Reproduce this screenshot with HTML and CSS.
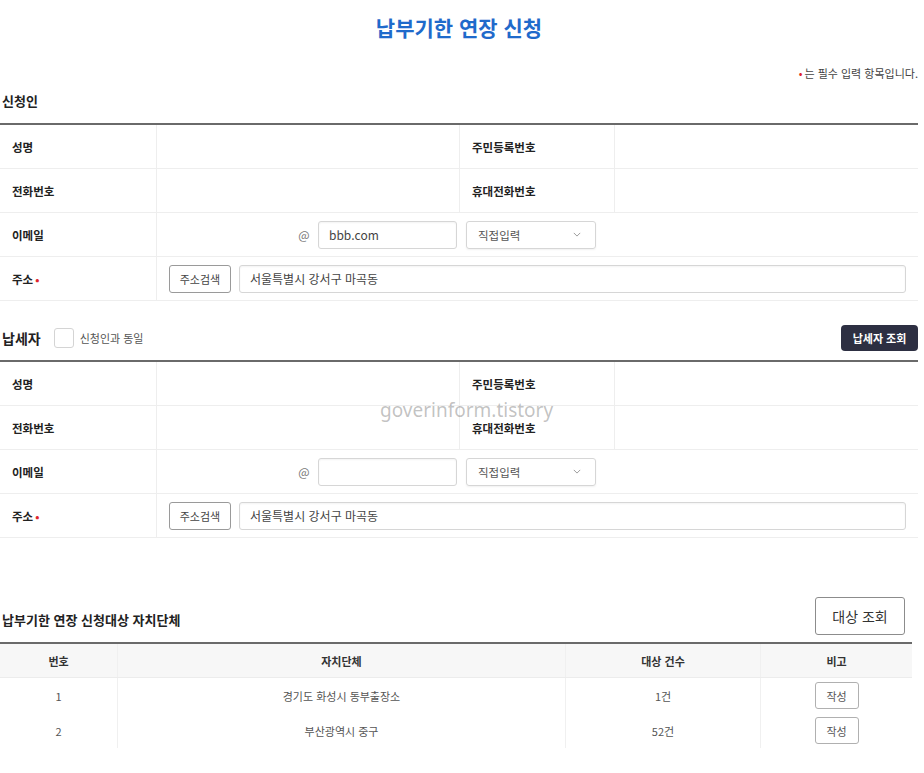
FILE: index.html
```html
<!DOCTYPE html>
<html lang="ko">
<head>
<meta charset="utf-8">
<title>납부기한 연장 신청</title>
<link rel="stylesheet" href="styles.css">
</head>
<body>
<div class="page">
  <h1 class="title">납부기한 연장 신청</h1>
  <p class="note"><span class="req">•</span>는 필수 입력 항목입니다.</p>

  <div class="sec-head">
    <h2 class="sec-title">신청인</h2>
  </div>
  <div class="form">
    <div class="row">
      <div class="lbl">성명</div>
      <div class="val"></div>
      <div class="lbl">주민등록번호</div>
      <div class="val"></div>
    </div>
    <div class="row">
      <div class="lbl">전화번호</div>
      <div class="val"></div>
      <div class="lbl">휴대전화번호</div>
      <div class="val"></div>
    </div>
    <div class="row">
      <div class="lbl">이메일</div>
      <div class="val wide email">
        <span class="email-id"></span>
        <span class="at">@</span>
        <span class="input domain">bbb.com</span>
        <span class="select">직접입력<svg class="chev" viewBox="0 0 10 6" width="8" height="5"><path d="M1 1l4 4 4-4" fill="none" stroke="#999" stroke-width="1.2"/></svg></span>
      </div>
    </div>
    <div class="row">
      <div class="lbl">주소<span class="req">•</span></div>
      <div class="val wide addr">
        <span class="btn-line">주소검색</span>
        <span class="input addr-input">서울특별시 강서구 마곡동</span>
      </div>
    </div>
  </div>

  <div class="sec-head sec2">
    <h2 class="sec-title">납세자</h2>
    <span class="check"></span>
    <span class="check-label">신청인과 동일</span>
    <span class="btn-dark">납세자 조회</span>
  </div>
  <div class="form">
    <div class="row">
      <div class="lbl">성명</div>
      <div class="val"></div>
      <div class="lbl">주민등록번호</div>
      <div class="val"></div>
    </div>
    <div class="row">
      <div class="lbl">전화번호</div>
      <div class="val"></div>
      <div class="lbl">휴대전화번호</div>
      <div class="val"></div>
    </div>
    <div class="row">
      <div class="lbl">이메일</div>
      <div class="val wide email">
        <span class="email-id"></span>
        <span class="at">@</span>
        <span class="input domain"></span>
        <span class="select">직접입력<svg class="chev" viewBox="0 0 10 6" width="8" height="5"><path d="M1 1l4 4 4-4" fill="none" stroke="#999" stroke-width="1.2"/></svg></span>
      </div>
    </div>
    <div class="row">
      <div class="lbl">주소<span class="req">•</span></div>
      <div class="val wide addr">
        <span class="btn-line">주소검색</span>
        <span class="input addr-input">서울특별시 강서구 마곡동</span>
      </div>
    </div>
  </div>

  <div class="sec-head sec3">
    <h2 class="sec-title">납부기한 연장 신청대상 자치단체</h2>
    <span class="btn-outline">대상 조회</span>
  </div>
  <div class="list">
    <div class="lrow lhead">
      <div>번호</div><div>자치단체</div><div>대상 건수</div><div>비고</div>
    </div>
    <div class="lrow">
      <div>1</div><div>경기도 화성시 동부출장소</div><div>1건</div><div><span class="btn-small">작성</span></div>
    </div>
    <div class="lrow">
      <div>2</div><div>부산광역시 중구</div><div>52건</div><div><span class="btn-small">작성</span></div>
    </div>
  </div>

  <div class="watermark">goverinform.tistory</div>
</div>
</body>
</html>
```

FILE: styles.css
```css
* { box-sizing: border-box; }
body {
  margin: 0;
  background: #fff;
  font-family: "Noto Sans CJK KR", "Noto Sans", sans-serif;
  color: #333;
}
.page {
  position: relative;
  width: 918px;
}
.title {
  margin: 0;
  height: 54px;
  line-height: 54px;
  text-align: center;
  font-size: 21px;
  font-weight: 700;
  color: #1f6acb;
}
.note {
  margin: 10px 0 0;
  line-height: 18px;
  text-align: right;
  font-size: 11px;
  color: #444;
}
.req {
  color: #e0262b;
  font-size: 11px;
  margin: 0 2px 0 2px;
}
.sec-head {
  display: flex;
  align-items: center;
  margin-top: 9px;
  margin-bottom: 12px;
  padding-left: 2px;
}
.sec-title {
  margin: 0;
  font-size: 13px;
  font-weight: 700;
  line-height: 20px;
  color: #222;
}
.form {
  border-top: 2px solid #6a6a6a;
}
.row {
  display: grid;
  grid-template-columns: 156px 304px 154px 1fr;
  height: 44px;
  border-bottom: 1px solid #eeeeee;
}
.lbl {
  display: flex;
  align-items: center;
  padding-left: 12px;
  font-size: 11.5px;
  line-height: 16px;
  font-weight: 700;
  color: #222;
}
.lbl .req { margin-left: 2px; }
.val {
  border-left: 1px solid #eeeeee;
  border-right: 1px solid #eeeeee;
}
.row .val:last-child { border-right: none; }
.val.wide {
  grid-column: 2 / 5;
  display: flex;
  align-items: center;
  padding-left: 12px;
  padding-right: 12px;
  border-right: none;
}
.email-id { width: 125px; }
.at {
  width: 20px;
  text-align: center;
  font-size: 12px;
  color: #777;
  margin-right: 4px;
}
.input {
  display: flex;
  align-items: center;
  height: 28px;
  border: 1px solid #d6d6d6;
  border-radius: 3px;
  padding: 0 10px;
  font-size: 12px;
  color: #444;
  background: #fff;
  box-shadow: inset 0 1px 2px rgba(0,0,0,0.05);
}
.domain { width: 139px; }
.select {
  display: flex;
  align-items: center;
  justify-content: space-between;
  width: 130px;
  height: 28px;
  margin-left: 9px;
  border: 1px solid #d6d6d6;
  border-radius: 3px;
  padding: 0 14px 0 11px;
  font-size: 11.5px;
  color: #555;
  box-shadow: 0 1px 2px rgba(0,0,0,0.06);
}
.btn-line {
  display: flex;
  align-items: center;
  justify-content: center;
  width: 62px;
  height: 28px;
  border: 1px solid #9a9a9a;
  border-radius: 3px;
  font-size: 11px;
  color: #444;
  margin-right: 8px;
}
.addr-input { flex: 1; }
.sec2 {
  margin-top: 24px;
  margin-bottom: 9px;
  height: 26px;
}
.sec2 .sec-title { font-size: 14px; }
.check {
  width: 20px;
  height: 20px;
  border: 1px solid #d4d4d4;
  border-radius: 3px;
  margin-left: 13px;
  margin-right: 6px;
}
.check-label {
  font-size: 11px;
  color: #555;
}
.btn-dark {
  margin-left: auto;
  display: flex;
  align-items: center;
  justify-content: center;
  width: 77px;
  height: 26px;
  background: #2d2f42;
  color: #fff;
  border-radius: 4px;
  font-size: 11px;
  font-weight: 700;
}
.sec3 {
  margin-top: 59px;
  margin-bottom: 7px;
  align-items: flex-end;
  width: 912px;
}
.sec3 .sec-title { padding-bottom: 5px; }
.btn-outline {
  margin-left: auto;
  margin-right: 7px;
  display: flex;
  align-items: center;
  justify-content: center;
  width: 90px;
  height: 38px;
  border: 1px solid #8c8c8c;
  border-radius: 3px;
  font-size: 14px;
  color: #333;
}
.list {
  width: 912px;
  border-top: 2px solid #6a6a6a;
}
.lrow {
  display: grid;
  grid-template-columns: 117px 448px 195px 1fr;
  height: 35px;
}
.lrow > div {
  display: flex;
  align-items: center;
  justify-content: center;
  font-size: 11px;
  color: #555;
  border-left: 1px solid #f0f0f0;
}
.lrow > div:first-child { border-left: none; }
.lhead {
  height: 34px;
  background: #f7f7f7;
  border-bottom: 1px solid #ececec;
}
.lhead > div {
  font-weight: 700;
  color: #333;
}
.btn-small {
  display: flex;
  align-items: center;
  justify-content: center;
  width: 44px;
  height: 27px;
  border: 1px solid #b0b0b0;
  border-radius: 3px;
  font-size: 11px;
  color: #555;
}
.watermark {
  position: absolute;
  left: 380px;
  top: 402px;
  line-height: 16px;
  font-family: "Noto Sans", sans-serif;
  font-size: 19px;
  color: rgba(120,120,120,0.45);
  pointer-events: none;
}
```
